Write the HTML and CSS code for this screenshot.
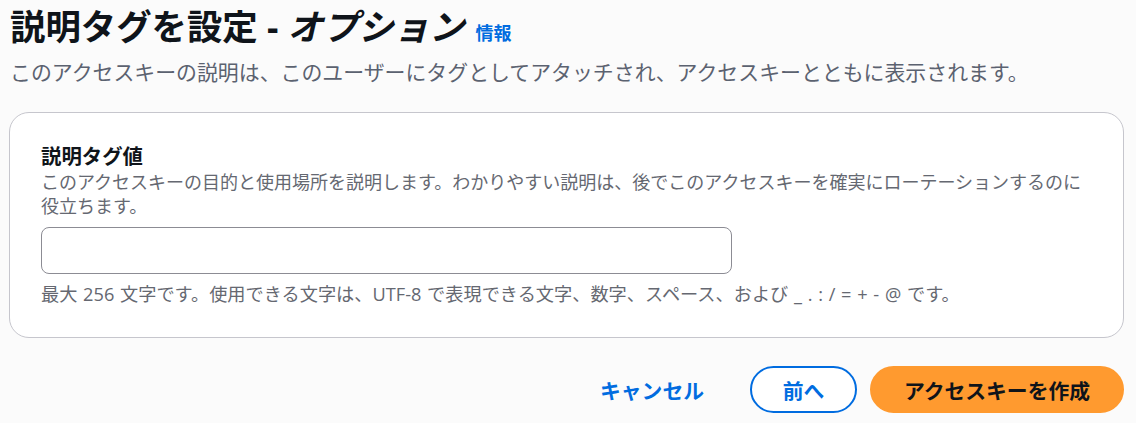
FILE: index.html
```html
<!DOCTYPE html>
<html lang="ja">
<head>
  <meta charset="UTF-8">
  <meta name="viewport" content="width=device-width, initial-scale=1.0">
  <title>説明タグを設定</title>

  <link rel="stylesheet" href="styles.css">

</head>
<body>

  <!-- 見出し -->
  <div class="header">
    <h1 class="title">説明タグを設定 - <i>オプション</i></h1>
    <a class="info" href="#">情報</a>
  </div>
  <p class="subtitle">このアクセスキーの説明は、このユーザーにタグとしてアタッチされ、アクセスキーとともに表示されます。</p>

  <!-- 入力カード -->
  <div class="card">
    <label class="label" for="tag">説明タグ値</label>
    <p class="desc">このアクセスキーの目的と使用場所を説明します。わかりやすい説明は、後でこのアクセスキーを確実にローテーションするのに役立ちます。</p>
    <input class="input" id="tag" type="text">
    <p class="constraint">最大 256 文字です。使用できる文字は、UTF-8 で表現できる文字、数字、スペース、および _ . : / = + - @ です。</p>
  </div>

  <!-- ボタン -->
  <div class="actions">
    <a class="btn-link" href="#">キャンセル</a>
    <button class="btn btn-normal">前へ</button>
    <button class="btn btn-primary">アクセスキーを作成</button>
  </div>

</body>
</html>
```

FILE: styles.css
```css
html {
  font-family: "Open Sans", "Noto Sans CJK JP", sans-serif;
}

body {
  margin: 0;
  padding: 6px 12px 0 10px;
  background-color: #fbfbfb;
  color: #0f141a;
}

.header {
  display: flex;
  align-items: baseline;
  gap: 11px;
}

.title {
  margin: 0;
  font-size: 35.4px;
  line-height: 40px;
  font-weight: 700;
}

/* オプション 部分は斜体 */
.title i {
  font-style: italic;
}

.info {
  font-size: 18px;
  font-weight: 700;
  color: #006ce0;
  text-decoration: none;
}

.subtitle {
  margin: 12px 0 0;
  font-size: 20.9px;
  line-height: 28px;
  color: #5b6270;
}

.card {
  margin: 26px 0 0 -1px;
  padding: 29px 30px 31px 31px;
  background-color: #fff;
  border: 1px solid #c6c6cd;
  border-radius: 20px;
}

.label {
  display: block;
  font-size: 20.4px;
  line-height: 28px;
  font-weight: 700;
}

.desc {
  margin: 0;
  font-size: 18px;
  line-height: 24px;
  color: #656871;
}

.input {
  display: block;
  box-sizing: border-box;
  width: 691px;
  height: 47px;
  margin-top: 9px;
  border: 1px solid #8c8c94;
  border-radius: 8px;
  background-color: #fff;
}

/* 半角スペースが少し広い */
.constraint {
  margin: 8px 0 0;
  font-size: 18.2px;
  line-height: 24px;
  word-spacing: 1px;
  color: #656871;
}

.actions {
  display: flex;
  justify-content: flex-end;
  align-items: center;
  gap: 13px;
  margin-top: 28px;
}

.btn-link {
  margin-right: 33px;
  font-size: 20.8px;
  font-weight: 700;
  color: #006ce0;
  text-decoration: none;
}

.btn {
  box-sizing: border-box;
  height: 47px;
  padding: 0;
  border-radius: 24px;
  font-family: inherit;
  font-size: 20.8px;
  font-weight: 700;
}

.btn-normal {
  width: 107px;
  background-color: #fff;
  border: 2px solid #006ce0;
  color: #006ce0;
}

.btn-primary {
  width: 254px;
  background-color: #ff9a2f;
  border: 2px solid #ff9a2f;
  color: #0f141a;
}
```
